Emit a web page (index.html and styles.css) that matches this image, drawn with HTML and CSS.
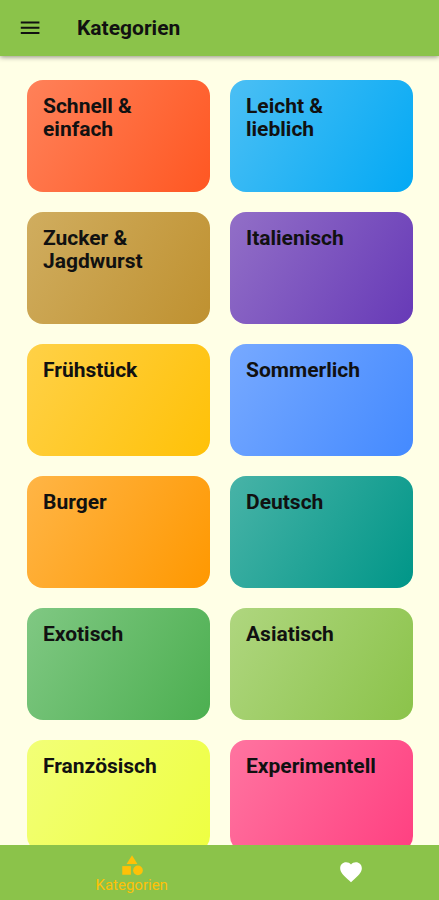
FILE: index.html
```html
<!DOCTYPE html>
<html lang="de">

	<head>
		<meta charset="UTF-8">
		<title>Kategorien</title>
		<meta name="viewport" content="width=device-width,initial-scale=1">
		<link rel="stylesheet" href="styles.css">
	</head>

	<body>
		<div class="app">
			<header class="app-bar">
				<button class="menu-btn" type="button" aria-label="Menü">
					<svg viewBox="0 0 24 24" width="26" height="26"><path d="M3.500 17.600h17.200v-1.800H3.500zM3.500 12.700h17.200v-1.800H3.500zM3.500 6v1.800h17.200V6z"/></svg>
				</button>
				<h1 class="title">Kategorien</h1>
			</header>

			<main class="content">
				<div class="grid">
					<a class="card deep-orange" href="#">Schnell &amp; einfach</a>
					<a class="card light-blue" href="#">Leicht &amp; lieblich</a>
					<a class="card brown" href="#">Zucker &amp; Jagdwurst</a>
					<a class="card purple" href="#">Italienisch</a>
					<a class="card amber" href="#">Frühstück</a>
					<a class="card blue" href="#">Sommerlich</a>
					<a class="card orange" href="#">Burger</a>
					<a class="card teal" href="#">Deutsch</a>
					<a class="card green" href="#">Exotisch</a>
					<a class="card light-green" href="#">Asiatisch</a>
					<a class="card lime" href="#">Französisch</a>
					<a class="card pink" href="#">Experimentell</a>
				</div>
			</main>

			<nav class="tab-bar">
				<a class="tab active" href="#">
					<svg viewBox="0 0 24 24" width="26" height="26"><path d="M12 3l-5 8h10z"/><circle cx="17.500" cy="17" r="4.500"/><path d="M3 13h8v8H3z"/></svg>
					<span>Kategorien</span>
				</a>
				<a class="tab" href="#" aria-label="Favoriten">
					<svg viewBox="0 0 24 24" width="26" height="26"><path d="M12 21.350l-1.450-1.320C5.400 15.360 2 12.280 2 8.500 2 5.420 4.420 3 7.500 3c1.740 0 3.410.810 4.500 2.090C13.090 3.810 14.760 3 16.500 3 19.580 3 22 5.420 22 8.500c0 3.780-3.400 6.860-8.550 11.540L12 21.350z"/></svg>
				</a>
			</nav>
		</div>
	</body>

</html>
```

FILE: styles.css
```css
*{
	padding: 0;
	margin: 0;
	box-sizing: border-box;
}
body{
	font-family: Roboto, "Liberation Sans", sans-serif;
	color: #111;
	background: #ffffe6;
}
a{
	color: inherit;
	text-decoration: none;
}
svg{
	display: block;
	fill: currentColor;
}

.app{
	display: flex;
	flex-direction: column;
	height: 100vh;
}

/* top bar */
.app-bar{
	display: flex;
	align-items: center;
	gap: 34px;
	height: 56px;
	padding: 0 17px;
	background: #8bc34a;
	box-shadow: 0 1px 5px rgba(0,0,0,0.45);
	z-index: 1;
}
.menu-btn{
	border: none;
	background: none;
	color: inherit;
	cursor: pointer;
}
.title{
	font-size: 21px;
	font-weight: 700;
	line-height: 24px;
}

/* category cards */
.content{
	flex: 1;
	min-height: 0;
	overflow: hidden;
}
.grid{
	display: grid;
	grid-template-columns: repeat(2, minmax(0, 1fr));
	gap: 20px;
	padding: 24px 26px 24px 27px;
}
.card{
	height: 112px;
	padding: 15px 24px 15px 16px;
	border-radius: 16px;
	font-size: 21px;
	font-weight: 700;
	line-height: 23px;
}
.deep-orange{ background: linear-gradient(122deg, #ff8159, #ff5722); }
.light-blue{ background: linear-gradient(122deg, #4bbff4, #03a9f4); }
.brown{ background: linear-gradient(122deg, #d0ad5f, #bf9130); }
.purple{ background: linear-gradient(122deg, #926fc7, #673ab7); }
.amber{ background: linear-gradient(122deg, #ffd147, #ffc107); }
.blue{ background: linear-gradient(122deg, #77a9ff, #448aff); }
.orange{ background: linear-gradient(122deg, #ffb546, #ff9800); }
.teal{ background: linear-gradient(122deg, #48b3a7, #009688); }
.green{ background: linear-gradient(122deg, #80c883, #4caf50); }
.light-green{ background: linear-gradient(122deg, #afd67f, #8bc34a); }
.lime{ background: linear-gradient(122deg, #f2ff77, #eeff41); }
.pink{ background: linear-gradient(122deg, #ff74a0, #ff4081); }

/* bottom navigation */
.tab-bar{
	display: flex;
	height: 55px;
	background: #8bc34a;
}
.tab{
	flex: 2;
	display: flex;
	flex-direction: column;
	align-items: center;
	justify-content: center;
	padding-bottom: 2px;
	color: #fff;
}
.tab.active{
	flex: 3;
	color: #ffc107;
	font-size: 15px;
	line-height: 14px;
}
```
